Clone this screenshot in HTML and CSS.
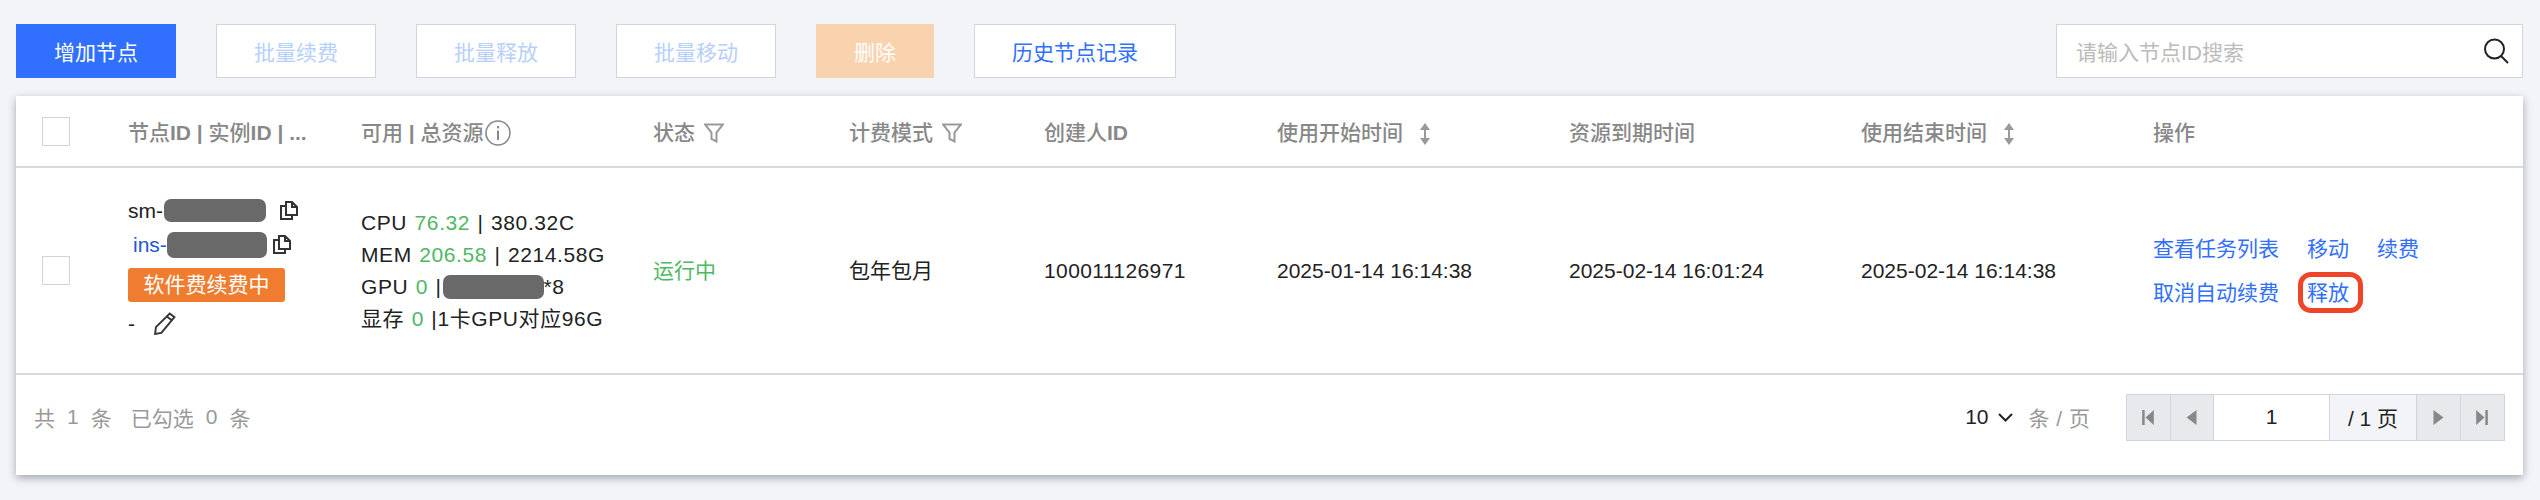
FILE: index.html
```html
<!DOCTYPE html>
<html lang="en">
<head>
    <meta charset="UTF-8">
    <title>节点列表</title>
    <link rel="stylesheet" href="styles.css">
</head>
<body>
    <div class="toolbar">
        <button class="btn btnPrimary">增加节点</button>
        <button class="btn btnDisabled">批量续费</button>
        <button class="btn btnDisabled">批量释放</button>
        <button class="btn btnDisabled">批量移动</button>
        <button class="btn btnDanger">删除</button>
        <button class="btn btnLink">历史节点记录</button>
        <div class="search">
            <span class="searchText">请输入节点ID搜索</span>
            <svg class="searchIcon" width="26" height="26" viewBox="0 0 26 26"><circle cx="11.5" cy="11" r="9.5" fill="none" stroke="#222" stroke-width="2"/><path d="M18 18l7 7" stroke="#222" stroke-width="2"/></svg>
        </div>
    </div>

    <section class="card">
        <table class="nodeTable">
            <colgroup>
                <col class="colCheck"><col class="colId"><col class="colRes"><col class="colState"><col class="colBill">
                <col class="colUser"><col class="colTime"><col class="colTime"><col class="colTime"><col>
            </colgroup>
            <thead>
                <tr>
                    <th><span class="check"></span></th>
                    <th>节点<b>ID</b> <b>|</b> 实例<b>ID</b> <b>|</b> <b>...</b></th>
                    <th>可用 <b>|</b> 总资源<svg class="infoIcon" width="26" height="26" viewBox="0 0 26 26"><circle cx="13" cy="13" r="12" fill="none" stroke="#888" stroke-width="1.6"/><rect x="12" y="6" width="2" height="2.4" fill="#888"/><rect x="12" y="10.5" width="2" height="9.5" fill="#888"/></svg></th>
                    <th>状态<svg class="filterIcon" width="20" height="20" viewBox="0 0 20 20"><path d="M1 1.500h18l-6.500 8v9l-5-2.500v-6.500z" fill="none" stroke="#999" stroke-width="2"/></svg></th>
                    <th>计费模式<svg class="filterIcon" width="20" height="20" viewBox="0 0 20 20"><path d="M1 1.500h18l-6.500 8v9l-5-2.500v-6.500z" fill="none" stroke="#999" stroke-width="2"/></svg></th>
                    <th>创建人<b>ID</b></th>
                    <th>使用开始时间<svg class="sortIcon" width="10" height="22" viewBox="0 0 10 22"><path d="M5 0l5 7H6v8h4l-5 7-5-7h4V7H0z" fill="#999"/></svg></th>
                    <th>资源到期时间</th>
                    <th>使用结束时间<svg class="sortIcon" width="10" height="22" viewBox="0 0 10 22"><path d="M5 0l5 7H6v8h4l-5 7-5-7h4V7H0z" fill="#999"/></svg></th>
                    <th>操作</th>
                </tr>
            </thead>
            <tbody>
                <tr>
                    <td><span class="check"></span></td>
                    <td class="cellId">
                        <div class="idLine idSm">sm-<span class="mask maskSm"></span>
                            <svg class="copyIcon" width="18" height="19" viewBox="0 0 18 19"><path d="M6 1h6l5 5v8H6zM12 1v5h5M6 5H1v13h11v-4" fill="none" stroke="#333" stroke-width="2"/></svg>
                        </div>
                        <div class="idLine idIns"><span class="insText">ins-</span><span class="mask maskIns"></span>
                            <svg class="copyIcon" width="18" height="19" viewBox="0 0 18 19"><path d="M6 1h6l5 5v8H6zM12 1v5h5M6 5H1v13h11v-4" fill="none" stroke="#333" stroke-width="2"/></svg>
                        </div>
                        <div class="badge">软件费续费中</div>
                        <div class="idLine idNote">-
                            <svg class="penIcon" width="23" height="23" viewBox="0 0 22 22"><path d="M16 1.500l4.500 3.500L8 20l-6 1 .8-6.500zM13.500 4.500l4.500 3.500" fill="none" stroke="#333" stroke-width="1.800"/></svg>
                        </div>
                    </td>
                    <td class="cellRes">
                        <div class="resLine">CPU <span class="green">76.32</span> | 380.32C</div>
                        <div class="resLine">MEM <span class="green">206.58</span> | 2214.58G</div>
                        <div class="resLine">GPU <span class="green">0</span> |<span class="mask maskGpu"></span>*8</div>
                        <div class="resLine">显存 <span class="green">0</span> |1卡GPU对应96G</div>
                    </td>
                    <td class="cellCn green">运行中</td>
                    <td class="cellCn">包年包月</td>
                    <td class="cellNum cellUser">100011126971</td>
                    <td class="cellNum">2025-01-14 16:14:38</td>
                    <td class="cellNum">2025-02-14 16:01:24</td>
                    <td class="cellNum">2025-02-14 16:14:38</td>
                    <td>
                        <div class="actions">
                            <a class="action">查看任务列表</a><a class="action">移动</a><a class="action">续费</a>
                            <a class="action">取消自动续费</a><a class="action marked">释放</a>
                        </div>
                    </td>
                </tr>
            </tbody>
        </table>

        <div class="footer">
            <div class="summary">
                <span>共</span><span>1</span><span>条</span>
                <span class="summaryGap">已勾选</span><span>0</span><span>条</span>
            </div>
            <div class="pageSize">
                <span class="sizeValue">10</span>
                <svg class="chevron" width="15" height="9" viewBox="0 0 15 9"><path d="M1 1l6.500 6.500L14 1" fill="none" stroke="#222" stroke-width="2"/></svg>
                <span class="sizeUnit">条 / 页</span>
            </div>
            <div class="pager">
                <span class="pageBtn"><svg width="12" height="15" viewBox="0 0 14 18"><path d="M0 0h3v18H0zM14 0v18L4 9z" fill="#888"/></svg></span>
                <span class="pageBtn"><svg width="11" height="15" viewBox="0 0 12 18"><path d="M12 0v18L0 9z" fill="#888"/></svg></span>
                <span class="pageInput">1</span>
                <span class="pageTotal">/ 1 页</span>
                <span class="pageBtn"><svg width="11" height="15" viewBox="0 0 12 18"><path d="M0 0v18l12-9z" fill="#888"/></svg></span>
                <span class="pageBtn"><svg width="12" height="15" viewBox="0 0 14 18"><path d="M0 0v18l10-9zM11 0h3v18h-3z" fill="#888"/></svg></span>
            </div>
        </div>
    </section>
</body>
</html>
```

FILE: styles.css
```css
*, *::after {
    box-sizing: border-box;
}

body {
    min-height: 500px;
    margin: 0;
    padding: 24px 17px 0 16px;
    background-color: #f2f4f8;
    font-family: "Liberation Sans", "Noto Sans CJK SC", sans-serif;
    font-size: 21px;
    color: #222;
}

.toolbar {
    display: flex;
    gap: 40px;
    height: 54px;
    margin-bottom: 18px;
}

.btn {
    height: 54px;
    padding: 0 37px;
    border: 1px solid #d0d5e0;
    background-color: #fff;
    font-family: inherit;
    font-size: 21px;
}
.btnPrimary {
    border-color: #306fff;
    background-color: #306fff;
    color: #fff;
}
.btnDisabled {
    color: #b7cffb;
}
.btnDanger {
    border-color: #f9d2ae;
    background-color: #f9d2ae;
    color: #fff;
}
.btnLink {
    color: #306fff;
}

.search {
    display: flex;
    align-items: center;
    justify-content: space-between;
    width: 467px;
    height: 54px;
    margin-left: auto;
    padding: 0 13px 0 19px;
    border: 1px solid #d0d5e0;
    background-color: #fff;
}
.searchText {
    color: #bbb;
}

.card {
    height: 379px;
    background-color: #fff;
    box-shadow: 0 3px 8px rgba(54, 58, 80, 0.42);
}

.nodeTable {
    width: 100%;
    table-layout: fixed;
    border-collapse: collapse;
}
.colCheck { width: 112px; }
.colId { width: 233px; }
.colRes { width: 292px; }
.colState { width: 196px; }
.colBill { width: 195px; }
.colUser { width: 233px; }
.colTime { width: 292px; }

.nodeTable th {
    height: 71px;
    padding: 0;
    border-bottom: 2px solid #d6dae2;
    color: #888;
    font-weight: 500;
    text-align: left;
    white-space: nowrap;
}
.nodeTable td {
    height: 207px;
    padding: 0;
    border-bottom: 2px solid #d6dae2;
    white-space: nowrap;
}
.nodeTable th:first-child, .nodeTable td:first-child {
    padding-left: 26px;
}
.nodeTable .cellId {
    padding-bottom: 5px;
}
.nodeTable .cellCn {
    padding-bottom: 4px;
}
.nodeTable .cellNum {
    padding-top: 1px;
}
.cellUser {
    letter-spacing: 0.4px;
}

.check {
    display: block;
    width: 28px;
    height: 29px;
    border: 1px solid #cfd5de;
    background-color: #fff;
}

.infoIcon {
    margin-left: 1px;
    vertical-align: -6px;
}
.filterIcon {
    margin-left: 9px;
    vertical-align: -3px;
}
.sortIcon {
    margin-left: 17px;
    vertical-align: -5px;
}

.idLine {
    display: flex;
    align-items: center;
    height: 24px;
}
.idSm {
    margin-top: -2px;
}
.idIns {
    margin-top: 10px;
    padding-left: 5px;
}
.idNote {
    margin-top: 10px;
}
.insText {
    color: #2456d6;
}
.mask {
    display: inline-block;
    border-radius: 7px;
    background-color: #696969;
}
.maskSm {
    width: 102px;
    height: 23px;
    margin-left: 1px;
}
.maskIns {
    width: 100px;
    height: 26px;
}
.maskGpu {
    width: 101px;
    height: 24px;
    margin-left: 1px;
    vertical-align: -5px;
}
.copyIcon {
    margin-left: 6px;
}
.idSm .copyIcon {
    margin-left: 14px;
}
.badge {
    width: 157px;
    height: 34px;
    margin-top: 11px;
    border-radius: 3px;
    background-color: #f07c30;
    color: #fff;
    line-height: 34px;
    text-align: center;
}
.penIcon {
    margin-left: 18px;
}

.resLine {
    height: 32px;
    letter-spacing: 0.6px;
    line-height: 32px;
    word-spacing: 1px;
}
.green {
    color: #4fb863;
}

.actions {
    display: grid;
    grid-template-columns: 154px 70px auto;
    row-gap: 14px;
}
.action {
    position: relative;
    height: 30px;
    color: #306fff;
    line-height: 30px;
}
/* red note drawn over the release link */
.marked::after {
    content: "";
    position: absolute;
    left: -9px;
    top: -6px;
    width: 65px;
    height: 41px;
    border: 5px solid #ee4528;
    border-radius: 13px;
}

.footer {
    display: flex;
    align-items: center;
    height: 84px;
    padding-right: 18px;
    padding-left: 18px;
}
.summary {
    display: flex;
    align-items: center;
    gap: 12px;
    margin-right: auto;
    color: #999;
}
.summaryGap {
    margin-left: 7px;
}
.pageSize {
    display: flex;
    align-items: center;
    margin-right: 36px;
}
.chevron {
    margin-left: 10px;
}
.sizeUnit {
    margin-left: 15px;
    color: #999;
    word-spacing: 1px;
}
.pager {
    display: flex;
    height: 47px;
    border: 1px solid #cfd5de;
}
.pager > span {
    display: flex;
    align-items: center;
    justify-content: center;
}
.pageBtn {
    width: 43.500px;
    border-right: 1px solid #cfd5de;
    background-color: #e7e9ed;
}
.pageBtn:last-child {
    border-right: 0;
}
.pageInput {
    width: 116px;
    border-right: 1px solid #cfd5de;
}
.pageTotal {
    width: 87px;
    border-right: 1px solid #cfd5de;
    background-color: #f2f4f8;
}
```
